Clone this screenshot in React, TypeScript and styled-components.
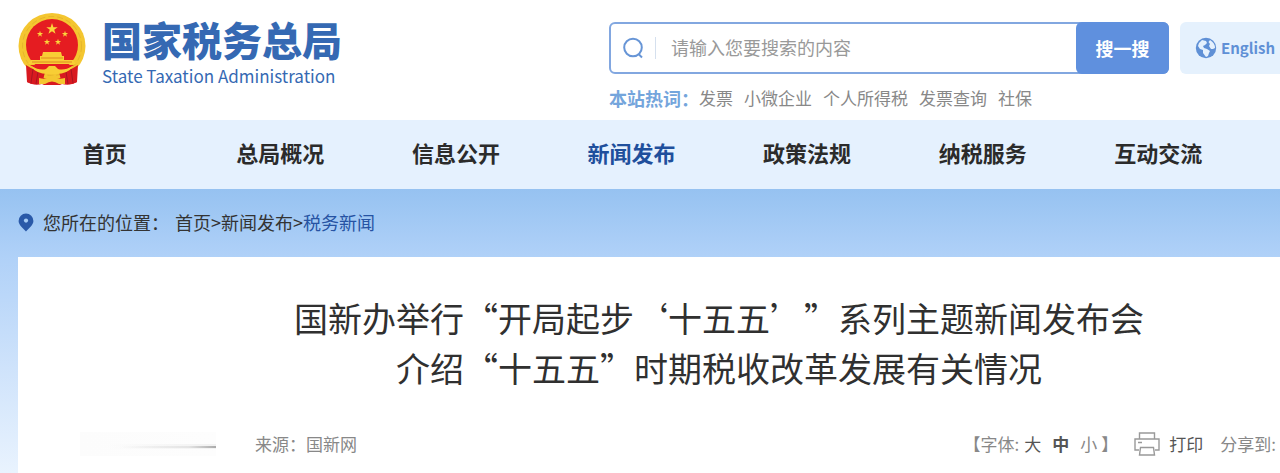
import React from "react";
import styled, { createGlobalStyle } from "styled-components";

const GlobalStyle = createGlobalStyle`
  * { box-sizing: border-box; }
  body {
    margin: 0;
    overflow-x: hidden;
    background: #fff;
    color: #333;
    font-family: "Noto Sans CJK SC", "Noto Sans", sans-serif;
    font-size: 17px;
    line-height: 24px;
    text-spacing-trim: space-all;
  }
  a { color: inherit; text-decoration: none; white-space: nowrap; }
  button, input { font: inherit; }
`;

const Header = styled.header`
  display: flex;
  justify-content: space-between;
  height: 120px;
  padding-left: 18px;
`;

const Brand = styled.a`
  display: flex;
  align-items: flex-start;
  gap: 16px;
  padding-top: 12px;
  color: #3569b3;
`;

const BrandText = styled.span`
  display: flex;
  flex-direction: column;
  gap: 3px;
  padding-top: 3px;
`;

const BrandName = styled.strong`
  font-size: 40px;
  line-height: 48px;
  font-weight: 900;
`;

const BrandSub = styled.span`
  font-size: 17px;
  line-height: 20px;
  font-weight: 400;
`;

const Tools = styled.div`
  display: flex;
  flex-direction: column;
  gap: 12px;
  width: 671px;
  padding-top: 22px;
`;

const ToolRow = styled.div`
  display: flex;
  gap: 11px;
`;

const SearchForm = styled.form`
  display: flex;
  align-items: center;
  flex: 1;
  height: 52px;
  padding-left: 12px;
  border: 2px solid #82a7e0;
  border-radius: 6px;
`;

const Divider = styled.span`
  width: 1px;
  height: 22px;
  margin: 0 15px 0 10px;
  background: #d5e0ee;
`;

const SearchInput = styled.input`
  flex: 1;
  min-width: 0;
  padding: 0 0 2px;
  border: 0;
  outline: 0;
  background: transparent;
  font-size: 18px;
  line-height: 24px;
  &::placeholder { color: #999; opacity: 1; }
`;

const SearchButton = styled.button`
  width: 93px;
  height: 52px;
  margin-right: -2px;
  padding: 0;
  border: 0;
  border-radius: 6px;
  background: #5f90de;
  color: #fff;
  font-size: 18px;
  font-weight: 700;
`;

const LangLink = styled.a`
  display: flex;
  align-items: center;
  gap: 4px;
  width: 100px;
  padding-left: 15px;
  border-radius: 6px 0 0 6px;
  background: #e5f1fd;
  color: #5f90d6;
  font-size: 15px;
  font-weight: 700;
`;

const HotWords = styled.div`
  display: flex;
  gap: 11px;
  color: #888;
`;

const HotLabel = styled.strong`
  margin-right: -11px;
  color: #74a5dc;
  font-size: 18px;
`;

const Nav = styled.nav`
  display: flex;
  height: 69px;
  padding: 0 34px 0 17px;
  background: #e5f1fe;
`;

const NavLink = styled.a<{ $active?: boolean }>`
  flex: 1;
  text-align: center;
  font-size: 22px;
  line-height: 65px;
  font-weight: 700;
  color: ${(p) => (p.$active ? "#1f4f9c" : "#2b2b2b")};
`;

const Page = styled.main`
  padding-left: 18px;
  background: linear-gradient(#96c2f1 0, #b0d1f8 68px, #cfe3fb 180px, #e9f3fe 284px);
`;

const Crumbs = styled.nav`
  display: flex;
  align-items: center;
  height: 68px;
  padding-bottom: 2px;
  font-size: 18px;
  svg { margin-right: 9px; }
`;

const CrumbLabel = styled.span`
  margin-right: 6px;
`;

const Current = styled.a`
  color: #2653a3;
`;

const Article = styled.article`
  min-height: 216px;
  padding-top: 36px;
  background: #fff;
`;

const Title = styled.h1`
  margin: 0;
  padding-left: 140px;
  text-align: center;
  font-size: 34px;
  line-height: 50px;
  font-weight: 400;
  color: #303030;
`;

const Meta = styled.div`
  display: flex;
  align-items: center;
  margin-top: 39px;
  padding-left: 62px;
  color: #888;
`;

const Smear = styled.span`
  width: 136px;
  height: 24px;
  margin-right: 39px;
  background:
    linear-gradient(90deg, transparent 30%, #e4e4e4 80%, #aaa) 0 14px / 100% 2px no-repeat,
    linear-gradient(90deg, transparent 20%, #f2f2f2) 0 12px / 100% 5px no-repeat,
    linear-gradient(90deg, #fcfcfc, #fdfdfd);
`;

const MetaTools = styled.div`
  display: flex;
  align-items: center;
  margin-left: auto;
  white-space: nowrap;
`;

const SizeButton = styled.button<{ $bold?: boolean; $dark?: boolean }>`
  margin-left: ${(p) => (p.$dark ? 5 : 11)}px;
  padding: 0;
  border: 0;
  background: none;
  color: ${(p) => (p.$dark || p.$bold ? "#555" : "#888")};
  font-weight: ${(p) => (p.$bold ? 700 : 400)};
`;

const SizeEnd = styled.span`
  margin-left: 4px;
`;

const PrintButton = styled.button`
  display: flex;
  align-items: center;
  gap: 9px;
  margin: 0 17px 0 16px;
  padding: 0;
  border: 0;
  background: none;
  color: #555;
`;

const Share = styled.span`
  margin-right: 4px;
`;

const STAR = "0,-10 2.3,-3.1 9.5,-3.1 3.7,1.2 5.9,8.1 0,3.9 -5.9,8.1 -3.7,1.2 -9.5,-3.1 -2.3,-3.1";
const stars = [
  [34, 17, 0.6], [22, 22, 0.33], [47, 22, 0.33], [29, 30, 0.33], [40, 30, 0.33],
];

const Emblem = () => (
  <svg width="68" height="75" viewBox="0 0 68 75" aria-hidden="true">
    <path d="M10 50 L58 50 L59 70 Q52 74 46 71 L42 73 H26 L22 71 Q16 74 9 70Z" fill="#d81920" />
    <ellipse cx="34" cy="34" rx="33.5" ry="33" fill="#f4c630" />
    <circle cx="34" cy="34" r="29.5" fill="none" stroke="#e6b52b" strokeWidth="1" strokeDasharray="6 3" />
    <circle cx="34" cy="33" r="26" fill="#e51c21" />
    {stars.map(([x, y, s]) => (
      <polygon key={`${x}-${y}`} points={STAR} transform={`translate(${x} ${y}) scale(${s})`} fill="#fbd43b" />
    ))}
    <path d="M25 40 H43 L44 44 H46 V48 H55 L58 52 H10 L13 48 H22 V44 H24Z" fill="#f8ce35" />
    <path d="M23 46 H45 M14 50 H54" stroke="#e08a22" strokeWidth="1" />
    <path d="M12 53 H56 L48 58 H20Z" fill="#e51c21" />
    <path d="M8 53 Q20 61 27 60 L24 72 Q16 74 9 70Z M60 53 Q48 61 41 60 L44 72 Q52 74 59 70Z" fill="#d81920" />
    <path d="M15 57 L13 71 M20 60 L18 72 M53 57 L55 71 M48 60 L50 72" stroke="#a91420" strokeWidth="1" />
    <path d="M13 54 Q22 59 28 57 L31 54 H37 L40 57 Q46 59 55 54 Q50 62 38 62 H30 Q18 62 13 54Z" fill="#f8ce35" />
    <path d="M21 66 Q28 68 30 65 Q34 62 38 65 Q40 68 47 66 V72 H41 Q34 67 27 72 H21Z" fill="#f4c630" />
  </svg>
);

const SearchIcon = () => (
  <svg width="22" height="22" viewBox="0 0 22 22" fill="none" stroke="#6795d6" strokeWidth="2" aria-hidden="true">
    <circle cx="10" cy="10.5" r="8.8" />
    <path d="M15.5 17 L19 20.5" />
  </svg>
);

const GlobeIcon = () => (
  <svg width="22" height="22" viewBox="0 0 22 22" aria-hidden="true">
    <circle cx="11" cy="11" r="10.2" fill="#5f90d6" />
    <path d="M7 3 Q4 5 3 9 L5 12 L8 13 L8 16 L11 20 L13 19 L14 16 L15 14 L12 12 L9 11 L8 9 L10 8 L12 6 L11 4Z M15 3 L13.5 5 L15 7 L14 9 L16 12 H18 L20 11 Q20 6 15 3Z" fill="#e5f1fd" />
  </svg>
);

const PinIcon = () => (
  <svg width="16" height="19" viewBox="0 0 16 19" aria-hidden="true">
    <path d="M8 0.5 A7.4 7.4 0 0 1 15.4 8 C15.4 12 11 15 8 18.5 C5 15 0.6 12 0.6 8 A7.4 7.4 0 0 1 8 .5Z" fill="#2a59a8" />
    <circle cx="8" cy="7.6" r="2.1" fill="#a6ccf5" />
  </svg>
);

const PrinterIcon = () => (
  <svg width="26" height="24" viewBox="0 0 26 24" fill="none" stroke="#999" strokeWidth="1.4" aria-hidden="true">
    <path d="M5.5 7 V1 H20.5 V7 M5 18 H1 V7 H25 V18 H21 M4 10.5 H8" />
    <path d="M6.5 15.5 H19.5 L20.5 23 H5.5Z" />
  </svg>
);

const hotWords = ["发票", "小微企业", "个人所得税", "发票查询", "社保"];
const navItems = ["首页", "总局概况", "信息公开", "新闻发布", "政策法规", "纳税服务", "互动交流"];

export default function App() {
  return (
    <div lang="zh-CN">
      <GlobalStyle />
      <Header>
        <Brand href="#">
          <Emblem />
          <BrandText>
            <BrandName>国家税务总局</BrandName>
            <BrandSub>State Taxation Administration</BrandSub>
          </BrandText>
        </Brand>
        <Tools>
          <ToolRow>
            <SearchForm onSubmit={(e) => e.preventDefault()}>
              <SearchIcon />
              <Divider />
              <SearchInput type="text" aria-label="搜索" placeholder="请输入您要搜索的内容" />
              <SearchButton type="submit">搜一搜</SearchButton>
            </SearchForm>
            <LangLink href="#">
              <GlobeIcon />
              English
            </LangLink>
          </ToolRow>
          <HotWords>
            <HotLabel>本站热词：</HotLabel>
            {hotWords.map((w) => (
              <a href="#" key={w}>{w}</a>
            ))}
          </HotWords>
        </Tools>
      </Header>
      <Nav>
        {navItems.map((item) => (
          <NavLink href="#" key={item} $active={item === "新闻发布"}>{item}</NavLink>
        ))}
      </Nav>
      <Page>
        <Crumbs>
          <PinIcon />
          <CrumbLabel>您所在的位置：</CrumbLabel>
          <a href="#">首页</a>&gt;<a href="#">新闻发布</a>&gt;<Current href="#">税务新闻</Current>
        </Crumbs>
        <Article>
          <Title>
            国新办举行“开局起步‘十五五’”系列主题新闻发布会
            <br />
            介绍“十五五”时期税收改革发展有关情况
          </Title>
          <Meta>
            <Smear />
            <span>来源：国新网</span>
            <MetaTools>
              <span>【字体:</span>
              <SizeButton type="button" $dark>大</SizeButton>
              <SizeButton type="button" $bold>中</SizeButton>
              <SizeButton type="button">小</SizeButton>
              <SizeEnd>】</SizeEnd>
              <PrintButton type="button">
                <PrinterIcon />
                打印
              </PrintButton>
              <Share>分享到:</Share>
            </MetaTools>
          </Meta>
        </Article>
      </Page>
    </div>
  );
}
